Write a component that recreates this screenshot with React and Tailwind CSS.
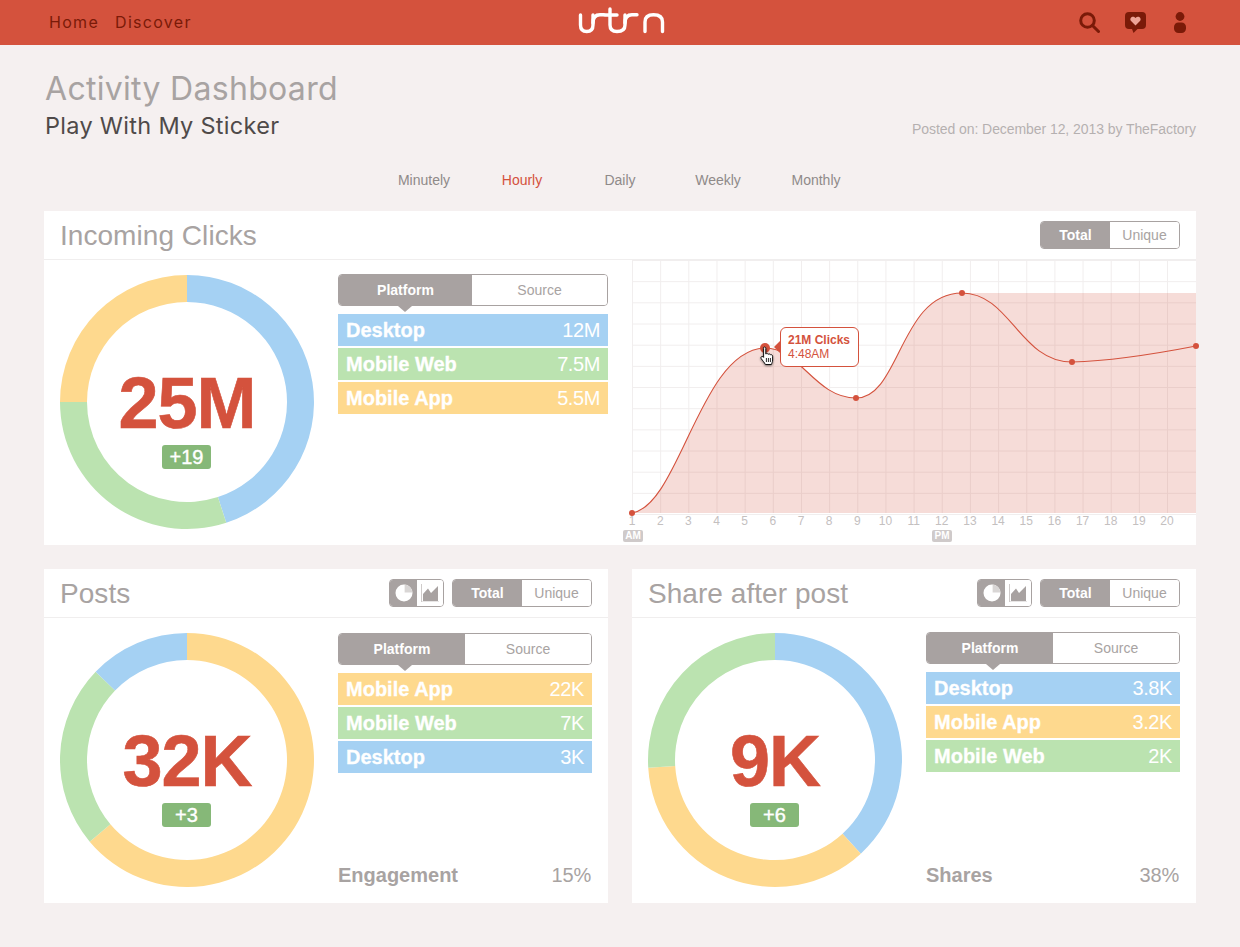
import React from "react";

const BLUE = "#a5d1f3", GREEN = "#bbe3b0", YELLOW = "#fed98e";

function arc(a0, a1) {
  const c = 127, R = 127, r = 100;
  const p = (rad, a) => {
    const t = (a * Math.PI) / 180;
    return `${(c + rad * Math.sin(t)).toFixed(2)} ${(c - rad * Math.cos(t)).toFixed(2)}`;
  };
  const large = a1 - a0 > 180 ? 1 : 0;
  return `M${p(R, a0)} A${R} ${R} 0 ${large} 1 ${p(R, a1)} L${p(r, a1)} A${r} ${r} 0 ${large} 0 ${p(r, a0)} Z`;
}

function Donut({ segs, value, delta }) {
  return (
    <div className="relative w-[254px] h-[254px] shrink-0">
      <svg width="254" height="254" viewBox="0 0 254 254" className="block">
        {segs.map(([a, b, col], i) => <path key={i} d={arc(a, b)} fill={col} />)}
      </svg>
      <div className="absolute inset-0 flex flex-col items-center pt-[92px]">
        <div className="text-[72px] leading-[72px] font-bold tracking-[-1px] text-[#d4523d] [-webkit-text-stroke:0.6px_#d4523d]">{value}</div>
        <div className="mt-[6px] mr-[1px] w-[49px] h-[24px] rounded-[3px] bg-[#86b878] text-white text-[20px] leading-[24px] text-center [-webkit-text-stroke:0.4px_#fff]">{delta}</div>
      </div>
    </div>
  );
}

function TotalToggle() {
  return (
    <div className="flex w-[140px] h-[28px] rounded-[4px] border border-[#a8a2a1] overflow-hidden text-[14px] leading-[26px] text-center">
      <div className="w-[69px] bg-[#a8a2a1] text-white font-bold">Total</div>
      <div className="flex-1 bg-white text-[#a8a3a2]">Unique</div>
    </div>
  );
}

function ViewToggle() {
  return (
    <div className="flex w-[55px] h-[28px] rounded-[4px] border border-[#a8a2a1] overflow-hidden">
      <div className="w-[27px] bg-[#a8a2a1] flex items-center justify-center">
        <svg width="18" height="18" viewBox="0 0 18 18">
          <circle cx="9" cy="9" r="8.5" fill="#fff" />
          <path d="M9.6 .5 A8.5 8.5 0 0 1 17.5 8.4 H9.6 Z" fill="#d9d6d5" />
        </svg>
      </div>
      <div className="flex-1 bg-white flex items-center justify-center">
        <svg width="18" height="18" viewBox="0 0 18 18">
          <path d="M0.5 0 V18 H18" fill="none" stroke="#cfcbca" strokeWidth="1" />
          <path d="M2 17 V10 L7 4.5 L10 9 L17 2 V17 Z" fill="#a8a2a1" />
        </svg>
      </div>
    </div>
  );
}

function Segmented({ split }) {
  return (
    <div className="relative">
      <div className="flex h-[32px] rounded-[4px] border border-[#a8a2a1] overflow-hidden text-[14px] leading-[30px] text-center">
        <div className="bg-[#a8a2a1] text-white font-bold" style={{ width: split }}>Platform</div>
        <div className="flex-1 bg-white text-[#a8a3a2]">Source</div>
      </div>
      <div className="absolute top-[32px] left-[60px] w-0 h-0 border-x-[7px] border-x-transparent border-t-[6px] border-t-[#a8a2a1]"></div>
    </div>
  );
}

function Legend({ rows }) {
  return (
    <div className="mt-[8px] flex flex-col gap-[2px]">
      {rows.map(([label, val, col]) => (
        <div key={label} className="h-[32px] px-[8px] flex justify-between items-center text-white text-[20px] leading-[32px]" style={{ background: col }}>
          <span className="font-bold [-webkit-text-stroke:0.3px_#fff]">{label}</span>
          <span className="tracking-[-0.4px]">{val}</span>
        </div>
      ))}
    </div>
  );
}

function CardHeader({ title, view }) {
  return (
    <div className="h-[49px] border-b border-[#f0eeee] pl-[16px] pr-[16px] flex items-center justify-between">
      <div className="text-[28px] leading-[49px] tracking-[0.05px] text-[#a8a3a2]">{title}</div>
      <div className="flex items-center gap-[8px]">
        {view && <ViewToggle />}
        <TotalToggle />
      </div>
    </div>
  );
}

function SmallCard({ title, segs, value, delta, rows, statLabel, stat, top, split }) {
  return (
    <div className="bg-white h-[334px]">
      <CardHeader title={title} view />
      <div className="flex h-[285px] pl-[16px] pr-[16px]">
        <div className="pt-[15px]"><Donut segs={segs} value={value} delta={delta} /></div>
        <div className="ml-[24px] flex-1 flex flex-col pb-[16px]" style={{ paddingTop: top }}>
          <Segmented split={split} />
          <Legend rows={rows} />
          <div className="mt-auto flex justify-between pr-[1px] text-[20px] leading-[24px] text-[#a8a3a2]">
            <span className="font-bold">{statLabel}</span>
            <span className="tracking-[-0.2px]">{stat}</span>
          </div>
        </div>
      </div>
    </div>
  );
}

const vx = Array.from({ length: 20 }, (_, i) => 28.16 * i + 0.5);
const hy = Array.from({ length: 13 }, (_, i) => 21.17 * i);
const curve = "M0,253 C48,245 68,90 133,88 C168,88 183,138 224,138 C268,138 268,33 330,33";
const curve2 = "C378,33 388,102 440,102 C478,101 528,93 564,86";

function Chart() {
  return (
    <div className="relative w-[564px] h-[285px]">
      <svg width="572" height="258" viewBox="0 0 572 258" className="block overflow-visible">
        {vx.map((x) => <line key={x} x1={x} x2={x} y1="0" y2="253" stroke="#f1eeee" />)}
        {hy.map((y) => <line key={y} x1="0" x2="564" y1={y + 0.5} y2={y + 0.5} stroke="#f1eeee" />)}
        <path d={`${curve} L564,33 L564,253 L0,253 Z`} fill="#d4523d" fillOpacity="0.2" />
        <path d={`${curve} ${curve2}`} fill="none" stroke="#d4523d" strokeWidth="1.1" />
        {[[0, 253], [224, 138], [330, 33], [440, 102], [564, 86]].map(([x, y]) => (
          <circle key={x} cx={x} cy={y} r="3" fill="#d4523d" />
        ))}
        <circle cx="133" cy="88" r="5" fill="#d4523d" />
      </svg>
      <div className="flex ml-[-14px] text-[12px] leading-[14px] text-[#c4c0bf] text-center mt-[-4px]">
        {vx.map((_, i) => <div key={i} className="w-[28.16px] shrink-0">{i + 1}</div>)}
      </div>
      <div className="flex mt-[2px] ml-[-9px]">
        <div className="w-[20px] h-[12px] rounded-[2px] bg-[#cfcaca] text-white text-[10px] leading-[12px] font-bold text-center">AM</div>
        <div className="ml-[289px] w-[20px] h-[12px] rounded-[2px] bg-[#cfcaca] text-white text-[10px] leading-[12px] font-bold text-center">PM</div>
      </div>
      <div className="absolute left-[148px] top-[67px] w-[79px] h-[40px] rounded-[6px] border border-[#d4523d] bg-white pl-[7px] pt-[5px] text-[12px] leading-[14px] text-[#d4523d]">
        <div className="font-bold">21M Clicks</div>
        <div>4:48AM</div>
      </div>
      <div className="absolute left-[142px] top-[81px] w-0 h-0 border-y-[6px] border-y-transparent border-r-[6px] border-r-[#d4523d]"></div>
      <svg className="absolute left-[127px] top-[86px] drop-shadow-[0_1px_1px_rgba(0,0,0,0.5)]" width="16" height="20" viewBox="0 0 16 20">
        <path d="M4.5 1.5 C5.5 .6 6.8 1 6.8 2.4 V8 C7.6 7.4 8.8 7.4 9.2 8.3 C10 7.7 11.2 7.9 11.5 8.8 C12.5 8.4 13.6 9 13.6 10.2 V14 C13.6 16 12.8 17 12.4 18.5 H6.4 C5.6 16.8 3.6 14.6 2.2 12.6 C1.3 11.2 2.8 9.8 4 10.8 L4.6 11.4 V2.4 Z" fill="#fff" stroke="#111" strokeWidth="1" strokeLinejoin="round" />
        <path d="M7.4 12 V16 M9.4 12 V16 M11.4 12 V16" stroke="#111" strokeWidth="0.9" />
      </svg>
    </div>
  );
}

export default function App() {
  return (
    <div className="min-h-[947px] bg-[#f5f0f0] font-['Liberation_Sans',sans-serif]">
      <header className="h-[45px] bg-[#d4523d] flex items-center justify-between pl-[49px] pr-[54px] relative">
        <nav className="flex gap-[16px] mb-[2px] font-['Inter',sans-serif] text-[16px] tracking-[1.3px] text-[#7a1a08]">
          <span>Home</span>
          <span>Discover</span>
        </nav>
        <svg className="absolute left-[578px] top-[6px]" width="88" height="30" viewBox="0 0 88 30" fill="none" stroke="#fff" strokeWidth="3.4" strokeLinecap="round" strokeLinejoin="round">
          <path d="M2.5 9 V19 Q2.5 25.5 8.75 25.5 Q15 25.5 15 19 V9" />
          <path d="M15 17 Q15 8.8 22 8.8 H26" />
          <path d="M32 3 V19 Q32 25.5 39 25.5 Q47 25.5 47 19 V9" />
          <path d="M27 9 H39" />
          <path d="M47 17 Q47 8.8 54 8.8 H59" />
          <path d="M67 25.5 V16 Q67 8.8 75.5 8.8 Q84.5 8.8 84.5 16 V25.5" />
        </svg>
        <div className="flex items-center text-[#7a1a08]">
          <svg width="21" height="21" viewBox="0 0 21 21" fill="none" stroke="currentColor" strokeWidth="3" className="mr-[25px]">
            <circle cx="8.5" cy="8.5" r="6.8" />
            <path d="M13.5 13.5 L19.5 19.5" strokeLinecap="round" />
          </svg>
          <svg width="21" height="21" viewBox="0 0 21 21" className="mr-[28px]">
            <path d="M4 0 H17 Q21 0 21 4 V13 Q21 17 17 17 H12.5 L8.5 21 L7 17 H4 Q0 17 0 13 V4 Q0 0 4 0 Z" fill="currentColor" />
            <path d="M10.5 13.5 L5.8 8.8 C4 6 8 3 10.5 6 C13 3 17 6 15.2 8.8 Z" fill="#eda396" />
          </svg>
          <svg width="12" height="21" viewBox="0 0 12 21" fill="currentColor">
            <circle cx="6" cy="4.5" r="4.4" />
            <rect x="0" y="10.5" width="12" height="10.5" rx="4.5" />
          </svg>
        </div>
      </header>

      <main className="px-[44px]">
        <div className="flex justify-between items-end pt-[25px]">
          <div className="pl-[1px] font-['Inter',sans-serif]">
            <h1 className="text-[32px] leading-[38px] tracking-[0.3px] text-[#a8a3a2]">Activity Dashboard</h1>
            <h2 className="mt-[2px] text-[23.5px] leading-[32px] tracking-[0.3px] text-[#4f4a49]">Play With My Sticker</h2>
          </div>
          <div className="text-[14px] leading-[18px] tracking-[-0.07px] text-[#b5b0b0] pb-[4px]">Posted on: December 12, 2013 by TheFactory</div>
        </div>

        <div className="flex justify-center mt-[29px] h-[18px] text-[14px] leading-[18px] text-[#8f8a89]">
          {["Minutely", "Hourly", "Daily", "Weekly", "Monthly"].map((t) => (
            <div key={t} className={t === "Hourly" ? "w-[98px] text-center text-[#d4523d]" : "w-[98px] text-center"}>{t}</div>
          ))}
        </div>

        <section className="mt-[22px] bg-white h-[334px]">
          <CardHeader title="Incoming Clicks" />
          <div className="flex h-[285px] pl-[16px]">
            <div className="pt-[15px]">
              <Donut segs={[[0, 162, BLUE], [162, 270, GREEN], [270, 360, YELLOW]]} value="25M" delta="+19" />
            </div>
            <div className="ml-[24px] w-[270px] pt-[14px]">
              <Segmented split={133} />
              <Legend rows={[["Desktop", "12M", BLUE], ["Mobile Web", "7.5M", GREEN], ["Mobile App", "5.5M", YELLOW]]} />
            </div>
            <div className="ml-[24px]"><Chart /></div>
          </div>
        </section>

        <div className="grid grid-cols-2 gap-[24px] mt-[24px]">
          <SmallCard title="Posts" value="32K" delta="+3" top={15} split={126}
            segs={[[0, 230, YELLOW], [230, 314, GREEN], [314, 360, BLUE]]}
            rows={[["Mobile App", "22K", YELLOW], ["Mobile Web", "7K", GREEN], ["Desktop", "3K", BLUE]]}
            statLabel="Engagement" stat="15%" />
          <SmallCard title="Share after post" value="9K" delta="+6" top={14} split={126}
            segs={[[0, 137.5, BLUE], [137.5, 266.5, YELLOW], [266.5, 360, GREEN]]}
            rows={[["Desktop", "3.8K", BLUE], ["Mobile App", "3.2K", YELLOW], ["Mobile Web", "2K", GREEN]]}
            statLabel="Shares" stat="38%" />
        </div>
      </main>
    </div>
  );
}
